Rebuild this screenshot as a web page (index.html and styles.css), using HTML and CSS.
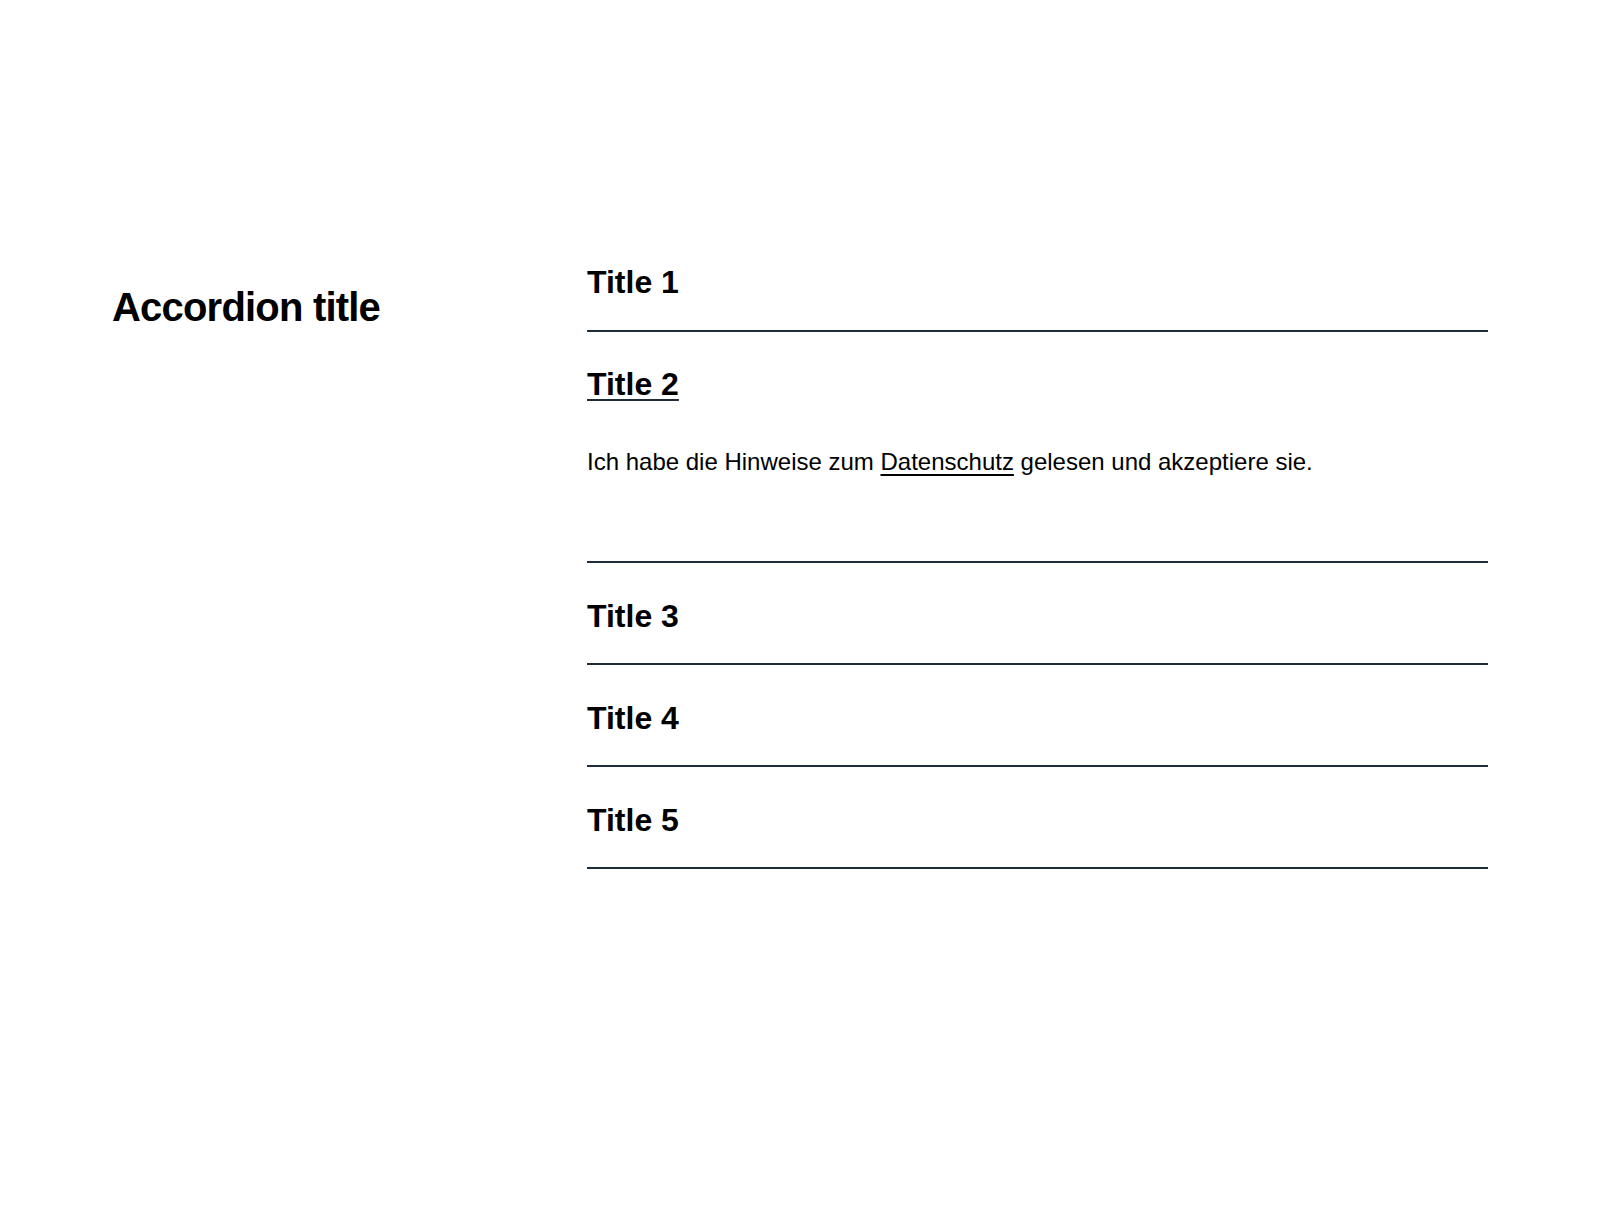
FILE: index.html
```html
<!DOCTYPE html>
<html lang="de">
<head>
<meta charset="utf-8">
<title>Accordion</title>
<link rel="stylesheet" href="styles.css">
</head>
<body>
<main class="page">
  <section class="accordion-section">
    <div class="intro">
      <h2 class="section-title">Accordion title</h2>
    </div>
    <div class="accordion">
      <div class="item">
        <h3 class="item-title">Title 1</h3>
      </div>
      <div class="item item-open">
        <h3 class="item-title item-title-active">Title 2</h3>
        <p class="item-body">Ich habe die Hinweise zum <a class="link" href="#">Datenschutz</a> gelesen und akzeptiere sie.</p>
      </div>
      <div class="item">
        <h3 class="item-title">Title 3</h3>
      </div>
      <div class="item">
        <h3 class="item-title">Title 4</h3>
      </div>
      <div class="item">
        <h3 class="item-title">Title 5</h3>
      </div>
    </div>
  </section>
</main>
</body>
</html>
```

FILE: styles.css
```css
html, body {
  margin: 0;
  padding: 0;
  background: #ffffff;
}

body {
  font-family: "Liberation Sans", Arial, sans-serif;
  color: #000000;
  width: 1600px;
  height: 1222px;
}

.page {
  padding: 229px 0 0 112px;
}

.accordion-section {
  display: grid;
  grid-template-columns: 475px 901px;
}

.section-title {
  margin: 54px 0 0 0;
  font-size: 40px;
  line-height: 48px;
  font-weight: 700;
  letter-spacing: -0.8px;
}

.accordion {
  display: flex;
  flex-direction: column;
}

.item {
  padding: 34px 0 28px 0;
  border-bottom: 2px solid #1f2d3b;
}

.item:first-child {
  padding-bottom: 29px;
}

.item-title {
  margin: 0;
  font-size: 32px;
  line-height: 38px;
  font-weight: 700;
}

.item-title-active {
  display: inline-block;
  text-decoration: underline;
  text-decoration-color: #1f2d3b;
  text-decoration-thickness: 2px;
  text-underline-offset: 4px;
}

.item-open {
  padding-top: 33px;
  padding-bottom: 81px;
}

.item-body {
  margin: 41px 0 0 0;
  font-size: 24px;
  line-height: 36px;
  font-weight: 400;
}

.link {
  color: #000000;
  text-decoration: underline;
  text-decoration-thickness: 2px;
  text-underline-offset: 4px;
}
```
